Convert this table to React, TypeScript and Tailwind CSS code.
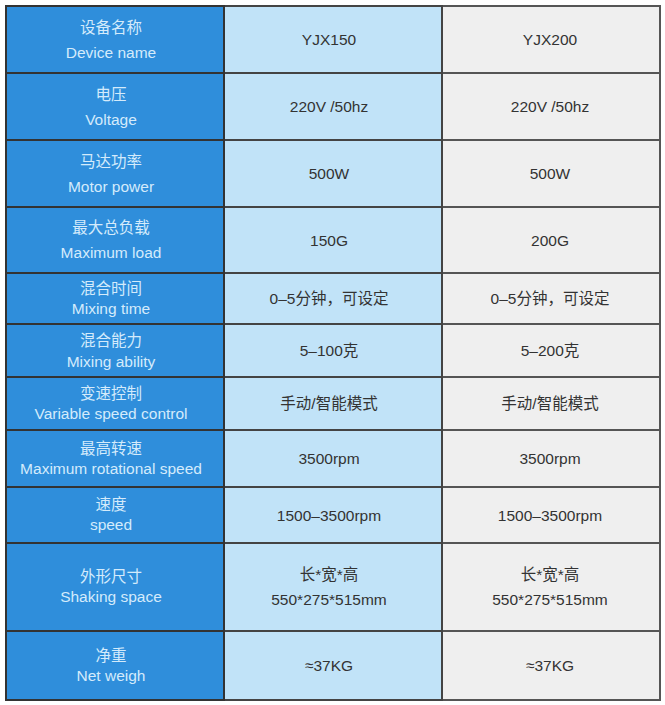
const rows = [
  { zh: "设备名称", en: "Device name", a: ["YJX150"], b: ["YJX200"], h: "h-[67px]", gap: "leading-[25px]" },
  { zh: "电压", en: "Voltage", a: ["220V /50hz"], b: ["220V /50hz"], h: "h-[67px]", gap: "leading-[25px]" },
  { zh: "马达功率", en: "Motor power", a: ["500W"], b: ["500W"], h: "h-[67px]", gap: "leading-[25px]" },
  { zh: "最大总负载", en: "Maximum load", a: ["150G"], b: ["200G"], h: "h-[66px]", gap: "leading-[25px]" },
  { zh: "混合时间", en: "Mixing time", a: ["0–5分钟，可设定"], b: ["0–5分钟，可设定"], h: "h-[51px]", gap: "leading-[20px]" },
  { zh: "混合能力", en: "Mixing ability", a: ["5–100克"], b: ["5–200克"], h: "h-[53px]", gap: "leading-[21px]" },
  { zh: "变速控制", en: "Variable speed control", a: ["手动/智能模式"], b: ["手动/智能模式"], h: "h-[53px]", gap: "leading-[20px]" },
  { zh: "最高转速", en: "Maximum rotational speed", a: ["3500rpm"], b: ["3500rpm"], h: "h-[57px]", gap: "leading-[20px]" },
  { zh: "速度", en: "speed", a: ["1500–3500rpm"], b: ["1500–3500rpm"], h: "h-[56px]", gap: "leading-[20px]" },
  { zh: "外形尺寸", en: "Shaking space", a: ["长*宽*高", "550*275*515mm"], b: ["长*宽*高", "550*275*515mm"], h: "h-[88px]", gap: "leading-[20px]" },
  { zh: "净重", en: "Net weigh", a: ["≈37KG"], b: ["≈37KG"], h: "h-[69px]", gap: "leading-[20px]" },
];

const font = { fontFamily: '"Liberation Sans", "Noto Sans CJK SC", sans-serif' };

function Value({ lines }: { lines: string[] }) {
  return (
    <div className="flex flex-col items-center leading-[25px]">
      {lines.map((l) => (
        <span key={l}>{l}</span>
      ))}
    </div>
  );
}

export default function App() {
  return (
    <div className="w-[665px] h-[705px] bg-white pt-[5px] pl-[5px]" style={font}>
      <table className="border-collapse border-2 border-[#3a3a3a] text-[15.5px] table-fixed w-[654px]">
        <tbody>
          {rows.map((r) => (
            <tr key={r.en} className={r.h}>
              <td className={`w-[218px] border-2 border-[#333] bg-[#2f8edb] pr-2 text-center text-[#d4ebfb] ${r.gap}`}>
                <div>{r.zh}</div>
                <div>{r.en}</div>
              </td>
              <td className="w-[218px] border-2 border-[#444] bg-[#c1e3f8] pr-2 text-center text-[#333]">
                <Value lines={r.a} />
              </td>
              <td className="w-[218px] border-2 border-[#555] bg-[#efefef] pr-0.5 text-center text-[#333]">
                <Value lines={r.b} />
              </td>
            </tr>
          ))}
        </tbody>
      </table>
    </div>
  );
}
